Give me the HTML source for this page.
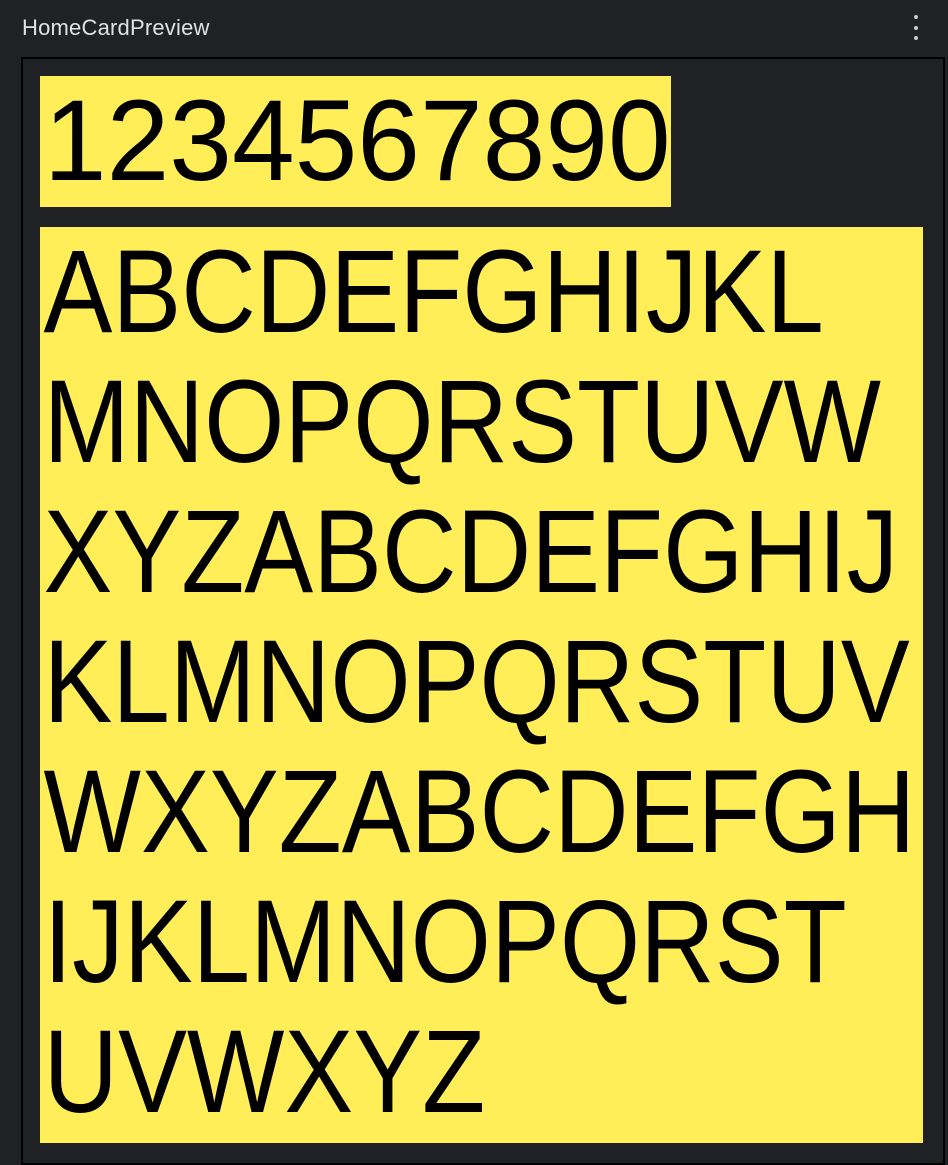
<!DOCTYPE html>
<html><head><style>
html,body{margin:0;padding:0;background:#202124;width:948px;height:1164px;overflow:hidden;font-family:"Liberation Sans",sans-serif}
.t{position:absolute;left:22px;top:15px;font-size:22px;color:#dfe1e5;letter-spacing:0.2px}
.dot{position:absolute;left:914px;width:4px;height:4px;border-radius:2px;background:#c8cacd}
.frame{position:absolute;left:21px;top:57px;width:920px;height:1104px;border:2px solid #000;box-sizing:content-box}
.num{position:absolute;left:40px;top:76px;width:631px;height:131px;background:#ffee58;font-size:115px;line-height:131px;color:#000;white-space:nowrap;overflow:hidden}
.num span{display:inline-block;transform:scaleX(0.98);transform-origin:left;padding-left:4px}
.abc{position:absolute;left:40px;top:227px;width:883px;height:916px;background:#ffee58;color:#000;font-size:118px;overflow:hidden}
.abc div{height:130px;line-height:130px;white-space:nowrap;transform:scaleX(0.875);transform-origin:left;padding-left:4px}
.abc .f{margin-top:0px}
</style></head><body>
<div class="t">HomeCardPreview</div>
<div class="dot" style="top:15px"></div><div class="dot" style="top:26px"></div><div class="dot" style="top:36px"></div>
<div class="frame"></div>
<div class="num"><span>1234567890</span></div>
<div class="abc">
<div class="f">ABCDEFGHIJKL</div>
<div>MNOPQRSTUVW</div>
<div>XYZABCDEFGHIJ</div>
<div>KLMNOPQRSTUV</div>
<div>WXYZABCDEFGH</div>
<div>IJKLMNOPQRST</div>
<div>UVWXYZ</div>
</div>
</body></html>
